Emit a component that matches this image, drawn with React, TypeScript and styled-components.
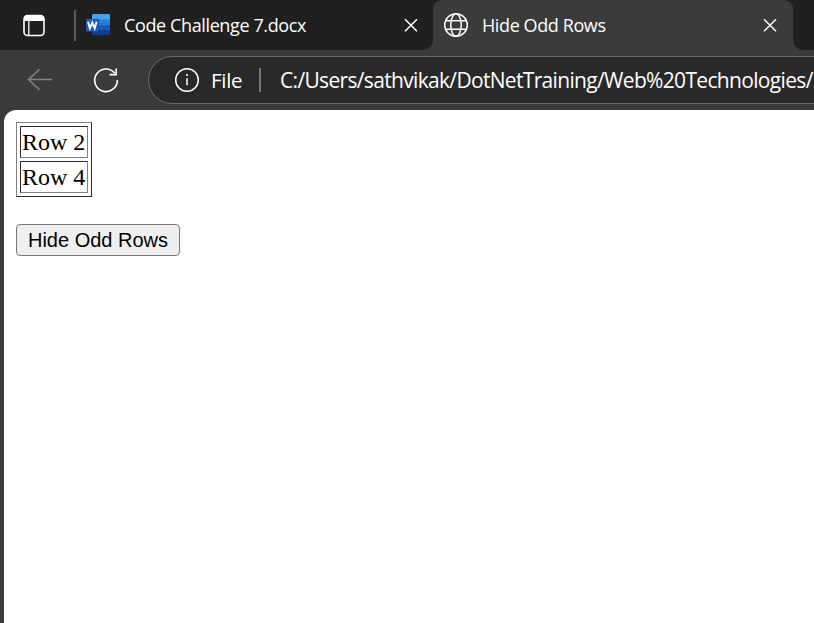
import React from "react";
import styled, { createGlobalStyle } from "styled-components";

const GlobalStyle = createGlobalStyle`
  * { box-sizing: border-box; }
  body { margin: 0; overflow: hidden; background: #3b3b3b; }
`;

const uiFont = `"Segoe UI", "Open Sans", "Noto Sans", sans-serif`;

const Window = styled.div`
  display: flex;
  flex-direction: column;
  width: 814px;
  height: 623px;
  overflow: hidden;
  background: #3b3b3b;
  font-family: ${uiFont};
  color: #fff;
`;

const TabStrip = styled.div`
  display: flex;
  height: 50px;
  background: #3b3b3b;
`;

const InactiveArea = styled.div`
  display: flex;
  align-items: center;
  width: 433px;
  height: 50px;
  background: #202020;
  border-bottom-right-radius: 10px;
`;

const TabActions = styled.div`
  display: flex;
  align-items: center;
  width: 74px;
  padding-left: 22px;
`;

const TabDivider = styled.div`
  width: 2px;
  height: 31px;
  margin-right: 10px;
  background: #5c5c5c;
`;

const TabTitle = styled.span<{ $gap: number; $spacing: number }>`
  flex: 1;
  margin-left: ${(p) => p.$gap}px;
  font-size: 18px;
  line-height: 26px;
  letter-spacing: ${(p) => p.$spacing}px;
  white-space: nowrap;
`;

const CloseButton = styled.button<{ $right: number }>`
  display: flex;
  width: 16px;
  height: 16px;
  margin-right: ${(p) => p.$right}px;
  padding: 0;
  border: 0;
  background: none;
  color: #fff;
`;

const ActiveTabBack = styled.div`
  display: flex;
  width: 360px;
  background: #202020;
`;

const ActiveTab = styled.div`
  display: flex;
  align-items: center;
  width: 360px;
  padding-left: 10px;
  background: #3b3b3b;
  border-radius: 9px 9px 0 0;
`;

const StripRest = styled.div`
  flex: 1;
  background: #202020;
  border-bottom-left-radius: 10px;
`;

const Toolbar = styled.div`
  display: flex;
  align-items: center;
  height: 60px;
  padding: 0 0 0 26px;
`;

const NavButton = styled.button<{ $gap: number; $color: string }>`
  display: flex;
  flex: none;
  margin: 0 ${(p) => p.$gap}px 0 0;
  padding: 0;
  border: 0;
  background: none;
  color: ${(p) => p.$color};
`;

const AddressBar = styled.div`
  display: flex;
  flex: none;
  align-items: center;
  width: 760px;
  height: 48px;
  padding-left: 25px;
  border: 1.5px solid #6b6b6b;
  border-radius: 24px;
  background: #292929;
  font-size: 21px;
  line-height: 30px;
  white-space: nowrap;
`;

const Scheme = styled.span`
  width: 48px;
  margin-left: 11px;
  font-size: 20.5px;
  letter-spacing: -0.3px;
`;

const AddressDivider = styled.div`
  width: 2px;
  height: 24px;
  margin-right: 19px;
  background: #777;
`;

const Address = styled.span`
  letter-spacing: -0.67px;
`;

const Page = styled.main`
  flex: 1;
  margin-left: 4px;
  padding: 12px;
  border-top-left-radius: 12px;
  background: #fff;
  color: #000;
`;

const RowTable = styled.table`
  width: 76px;
  height: 75px;
  margin-bottom: 27px;
  border: 1px solid;
  border-color: #808080 #2b2b2b #2b2b2b #808080;
  border-collapse: separate;
  border-spacing: 3px;
  font: 24px/28px "Liberation Serif", "Times New Roman", serif;
`;

const Cell = styled.td`
  height: 32px;
  padding: 1px;
  border: 1px solid;
  border-color: #2b2b2b #808080 #808080 #2b2b2b;
  white-space: nowrap;
`;

const HideButton = styled.button`
  display: block;
  width: 164px;
  height: 32px;
  padding: 0;
  border: 1px solid #767676;
  border-radius: 4px;
  background: #efefef;
  color: #000;
  font: 20px/28px "Liberation Sans", Arial, sans-serif;
  white-space: nowrap;
`;

const TabMenuIcon = () => (
  <svg width="24" height="24" viewBox="0 0 24 24" fill="none">
    <rect x="2" y="2.5" width="20" height="20" rx="3.5" stroke="#fff" strokeWidth="1.6" />
    <path d="M2 8V6a4 4 0 0 1 4-4h12a4 4 0 0 1 4 4v2z" fill="#fff" />
    <path d="M6.8 8v14" stroke="#fff" strokeWidth="1.3" />
  </svg>
);

const WordIcon = () => (
  <svg width="24" height="22" viewBox="0 0 24 22">
    <path d="M6 6V1.2Q6 0 7.2 0H22.8Q24 0 24 1.2V6z" fill="#41a5ee" />
    <path d="M6 5.5h18V11H6z" fill="#2b7cd3" />
    <path d="M6 11h18v5.5H6z" fill="#185abd" />
    <path d="M6 16.5h18v3.3q0 1.2-1.2 1.2H7.2Q6 21 6 19.8z" fill="#103f91" />
    <path d="M6 5h7.2v13H6z" fill="#0b2f70" opacity=".35" />
    <rect y="5" width="12.5" height="12.5" rx="1" fill="#185abd" />
    <path d="M2 7.8l1.9 6.6L6.3 8.6l2.4 5.8 1.9-6.6" stroke="#fff" strokeWidth="1.9" fill="none" />
  </svg>
);

const CloseIcon = () => (
  <svg width="16" height="16" viewBox="0 0 16 16" fill="none" stroke="currentColor" strokeWidth="1.5">
    <path d="M2 2.3l12 12M14 2.3l-12 12" />
  </svg>
);

const GlobeIcon = () => (
  <svg width="26" height="26" viewBox="0 0 26 26" fill="none" stroke="#fff" strokeWidth="1.5">
    <circle cx="13" cy="13" r="11.3" />
    <ellipse cx="13" cy="13" rx="5.2" ry="11.3" />
    <path d="M2.6 8.8h20.8M2.6 17.2h20.8" />
  </svg>
);

const BackIcon = () => (
  <svg width="28" height="24" viewBox="0 0 28 24" fill="none" stroke="currentColor" strokeWidth="1.5">
    <path d="M26 11.5H3M13.5 1.3L2.5 11.5l11 10.2" />
  </svg>
);

const ReloadIcon = () => (
  <svg width="28" height="28" viewBox="0 0 28 28" fill="none" stroke="currentColor" strokeWidth="1.6">
    <path d="M25.3 14A11.3 11.3 0 1 1 22.8 7.2" />
    <path d="M24.2 2.5V8.6h-6.6" />
  </svg>
);

const InfoIcon = () => (
  <svg width="26" height="26" viewBox="0 0 26 26" fill="none" stroke="#fff" strokeWidth="1.5">
    <circle cx="13" cy="13" r="11.3" />
    <path d="M13 11.3v7" />
    <circle cx="13" cy="8" r="1.1" fill="#fff" stroke="none" />
  </svg>
);

export default function App() {
  return (
    <>
      <GlobalStyle />
      <Window>
        <TabStrip>
          <InactiveArea>
            <TabActions><TabMenuIcon /></TabActions>
            <TabDivider />
            <WordIcon />
            <TabTitle $gap={14} $spacing={-0.38}>Code Challenge 7.docx</TabTitle>
            <CloseButton $right={14} aria-label="Close tab"><CloseIcon /></CloseButton>
          </InactiveArea>
          <ActiveTabBack>
            <ActiveTab>
              <GlobeIcon />
              <TabTitle $gap={13} $spacing={-0.4}>Hide Odd Rows</TabTitle>
              <CloseButton $right={15} aria-label="Close tab"><CloseIcon /></CloseButton>
            </ActiveTab>
          </ActiveTabBack>
          <StripRest />
        </TabStrip>
        <Toolbar>
          <NavButton $gap={38} $color="#858585" aria-label="Back"><BackIcon /></NavButton>
          <NavButton $gap={28} $color="#fff" aria-label="Reload"><ReloadIcon /></NavButton>
          <AddressBar>
            <InfoIcon />
            <Scheme>File</Scheme>
            <AddressDivider />
            <Address>C:/Users/sathvikak/DotNetTraining/Web%20Technologies/</Address>
          </AddressBar>
        </Toolbar>
        <Page>
          <RowTable>
            <tbody>
              <tr><Cell>Row 2</Cell></tr>
              <tr><Cell>Row 4</Cell></tr>
            </tbody>
          </RowTable>
          <HideButton>Hide Odd Rows</HideButton>
        </Page>
      </Window>
    </>
  );
}
